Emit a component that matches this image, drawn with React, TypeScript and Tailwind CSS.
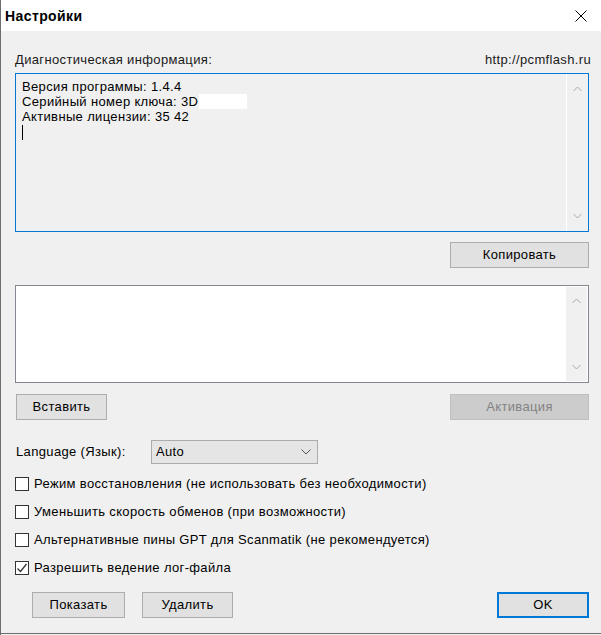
import React from "react";

const Chevron = ({ dir, className }: { dir: "up" | "down"; className?: string }) => (
  <svg width="9" height="6" viewBox="0 0 9 6" className={className}>
    {dir === "up" ? (
      <path d="M0.5 5 L4.5 1 L8.5 5" fill="none" stroke="#a8a8a8" strokeWidth="1" />
    ) : (
      <path d="M0.5 1 L4.5 5 L8.5 1" fill="none" stroke="#a8a8a8" strokeWidth="1" />
    )}
  </svg>
);

const Btn = ({ label, className = "" }: { label: string; className?: string }) => (
  <div
    className={`h-[26px] flex items-center justify-center bg-[#e1e1e1] border border-[#adadad] text-black ${className}`}
  >
    {label}
  </div>
);

const Check = ({ label, checked = false }: { label: string; checked?: boolean }) => (
  <div className="h-[28px] flex items-center">
    <div className="w-[14px] h-[14px] bg-white border border-[#333333] flex items-center justify-center">
      {checked && (
        <svg width="12" height="12" viewBox="0 0 12 12">
          <path d="M1.5 6.5 L4.5 9.5 L10.5 2" fill="none" stroke="#333333" strokeWidth="1.3" />
        </svg>
      )}
    </div>
    <span className="ml-[5px]">{label}</span>
  </div>
);

export default function App() {
  return (
    <div
      className="w-[601px] h-[635px] flex flex-col bg-[#f0f0f0] border-l border-[#6d6d6d] text-[13px] tracking-[0.35px] text-black overflow-hidden"
      style={{ fontFamily: '"Liberation Sans", Arial, sans-serif' }}
    >
      <div className="h-[31px] shrink-0 bg-white flex items-center justify-between pl-[4px] pr-[14px]">
        <span className="font-bold text-[14px] leading-none tracking-[0.4px]">Настройки</span>
        <svg width="12" height="12" viewBox="0 0 12 12">
          <path d="M0.5 0.5 L11.5 11.5 M11.5 0.5 L0.5 11.5" stroke="#000" strokeWidth="1" />
        </svg>
      </div>

      <div className="flex-1 flex flex-col pl-[14px] pr-[12px] pt-[20px] border-b border-[#6d6d6d]">
        <div className="h-[18px] flex items-center justify-between text-[#1a1a1a]">
          <span>Диагностическая информация:</span>
          <span className="mr-[-2px]">http://pcmflash.ru</span>
        </div>

        <div className="mt-[4px] h-[159px] border border-[#0078d7] bg-[#f0f0f0] flex">
          <div className="flex-1 pl-[6px] pt-[5px] leading-[15px]">
            <div>Версия программы: 1.4.4</div>
            <div className="flex items-center">
              <span>Серийный номер ключа: 3D</span>
              <span className="inline-block ml-[1px] w-[48px] h-[15px] bg-white" />
            </div>
            <div>Активные лицензии: 35 42</div>
            <div className="w-[1px] h-[15px] bg-black mt-[1px]" />
          </div>
          <div className="w-[22px] border-l border-white flex flex-col items-center justify-between py-[12px]">
            <Chevron dir="up" />
            <Chevron dir="down" />
          </div>
        </div>

        <div className="mt-[10px] flex justify-end">
          <Btn label="Копировать" className="w-[139px]" />
        </div>

        <div className="mt-[17px] h-[98px] border border-[#828790] bg-white flex">
          <div className="flex-1" />
          <div className="w-[21px] my-[1px] mr-[1px] bg-[#f0f0f0] flex flex-col items-center justify-between py-[11px]">
            <Chevron dir="up" />
            <Chevron dir="down" />
          </div>
        </div>

        <div className="mt-[11px] flex justify-between">
          <Btn label="Вставить" className="w-[91px] ml-[1px]" />
          <div className="w-[139px] h-[26px] flex items-center justify-center bg-[#cccccc] border border-[#bfbfbf] text-[#838383]">
            Активация
          </div>
        </div>

        <div className="mt-[20px] h-[24px] flex items-center">
          <span className="w-[135px] ml-[1px]">Language (Язык):</span>
          <div className="w-[167px] h-[24px] bg-[#e5e5e5] border border-[#acacac] flex items-center justify-between pl-[4px] pr-[6px]">
            <span>Auto</span>
            <svg width="10" height="6" viewBox="0 0 10 6">
              <path d="M0.5 0.5 L5 5 L9.5 0.5" fill="none" stroke="#555" strokeWidth="1" />
            </svg>
          </div>
        </div>

        <div className="mt-[6px] flex flex-col">
          <Check label="Режим восстановления (не использовать без необходимости)" />
          <Check label="Уменьшить скорость обменов (при возможности)" />
          <Check label="Альтернативные пины GPT для Scanmatik (не рекомендуется)" />
          <Check label="Разрешить ведение лог-файла" checked />
        </div>

        <div className="mt-[10px] flex items-center">
          <Btn label="Показать" className="w-[93px] ml-[17px]" />
          <Btn label="Удалить" className="w-[91px] ml-[17px]" />
          <div className="flex-1" />
          <div className="w-[92px] h-[26px] flex items-center justify-center bg-[#e1e1e1] border-2 border-[#0078d7]">
            OK
          </div>
        </div>
      </div>
      <div className="h-[1px] shrink-0 bg-[#f0f0f0]" />
    </div>
  );
}
